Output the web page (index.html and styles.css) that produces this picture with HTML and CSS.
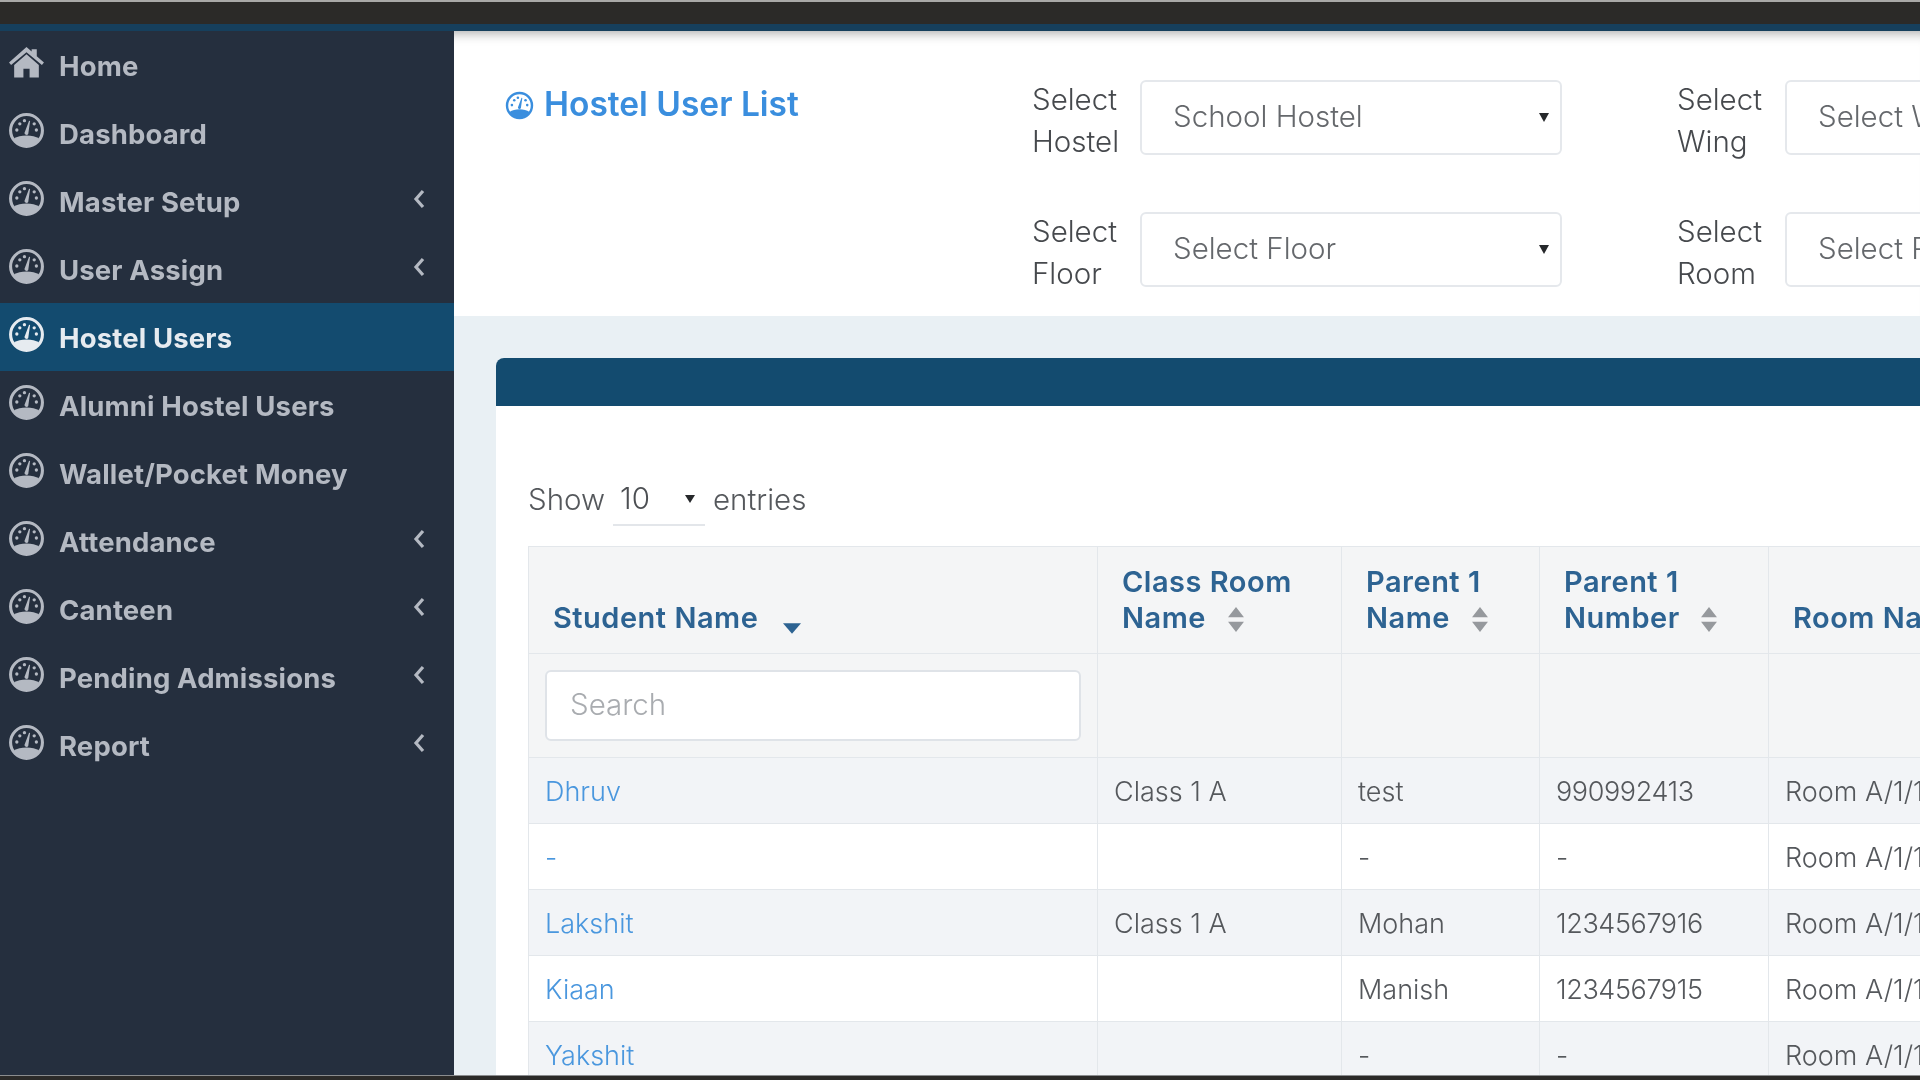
FILE: index.html
```html
<!DOCTYPE html>
<html lang="en">

<head>
    <meta charset="UTF-8">
    <title>Hostel User List</title>
    <link rel="stylesheet" href="styles.css">
</head>

<body>
    <svg class="icon-defs" width="0" height="0">
        <symbol id="gauge" viewBox="0 0 36 36">
            <circle cx="18" cy="18" r="15.5" fill="none" stroke="currentColor" stroke-width="3" />
            <path fill="currentColor" d="M5.500 26C9 23.800 13 22.800 18 22.800s9 1 12.500 3.200C28 31 23 33 18 33S8 31 5.500 26Z" />
            <path fill="currentColor" d="M16 20.500 20.500 8.500l1 .3-1.800 12.500a2 2 0 0 1-3.700-.8Z" />
            <circle cx="8.600" cy="17.500" r="1.600" fill="currentColor" />
            <circle cx="11.500" cy="11.500" r="1.600" fill="currentColor" />
            <circle cx="16" cy="8.400" r="1.600" fill="currentColor" />
            <circle cx="25.500" cy="11.500" r="1.600" fill="currentColor" />
            <circle cx="27.600" cy="17.500" r="1.600" fill="currentColor" />
        </symbol>
        <symbol id="sort" viewBox="0 0 14 22">
            <path fill="currentColor" d="M7 0 14 9H0ZM7 22 0 13H14Z" />
        </symbol>
    </svg>

    <div class="topbar"></div>

    <div class="app">
        <nav class="sidebar">
            <a class="nav-item">
                <svg class="nav-icon" viewBox="0 0 36 36"><path fill="currentColor" d="M18 3 1 18l2 2.400L18 8l15 12.400 2-2.400-7-6.200V5h-5v2.400ZM18 10 6 20.500v12h9V24h6v8.500h9v-12Z" /></svg>
                <span>Home</span>
            </a>
            <a class="nav-item">
                <svg class="nav-icon"><use href="#gauge" /></svg>
                <span>Dashboard</span>
            </a>
            <a class="nav-item">
                <svg class="nav-icon"><use href="#gauge" /></svg>
                <span>Master Setup</span>
                <svg class="nav-arrow" viewBox="0 0 12 20"><path fill="none" stroke="currentColor" stroke-width="3.200" d="M10 2 3 10l7 8" /></svg>
            </a>
            <a class="nav-item">
                <svg class="nav-icon"><use href="#gauge" /></svg>
                <span>User Assign</span>
                <svg class="nav-arrow" viewBox="0 0 12 20"><path fill="none" stroke="currentColor" stroke-width="3.200" d="M10 2 3 10l7 8" /></svg>
            </a>
            <a class="nav-item active">
                <svg class="nav-icon"><use href="#gauge" /></svg>
                <span>Hostel Users</span>
            </a>
            <a class="nav-item">
                <svg class="nav-icon"><use href="#gauge" /></svg>
                <span>Alumni Hostel Users</span>
            </a>
            <a class="nav-item">
                <svg class="nav-icon"><use href="#gauge" /></svg>
                <span>Wallet/Pocket Money</span>
            </a>
            <a class="nav-item">
                <svg class="nav-icon"><use href="#gauge" /></svg>
                <span>Attendance</span>
                <svg class="nav-arrow" viewBox="0 0 12 20"><path fill="none" stroke="currentColor" stroke-width="3.200" d="M10 2 3 10l7 8" /></svg>
            </a>
            <a class="nav-item">
                <svg class="nav-icon"><use href="#gauge" /></svg>
                <span>Canteen</span>
                <svg class="nav-arrow" viewBox="0 0 12 20"><path fill="none" stroke="currentColor" stroke-width="3.200" d="M10 2 3 10l7 8" /></svg>
            </a>
            <a class="nav-item">
                <svg class="nav-icon"><use href="#gauge" /></svg>
                <span>Pending Admissions</span>
                <svg class="nav-arrow" viewBox="0 0 12 20"><path fill="none" stroke="currentColor" stroke-width="3.200" d="M10 2 3 10l7 8" /></svg>
            </a>
            <a class="nav-item">
                <svg class="nav-icon"><use href="#gauge" /></svg>
                <span>Report</span>
                <svg class="nav-arrow" viewBox="0 0 12 20"><path fill="none" stroke="currentColor" stroke-width="3.200" d="M10 2 3 10l7 8" /></svg>
            </a>
        </nav>

        <main class="main">
            <header class="page-head">
                <h1 class="page-title">
                    <svg class="title-icon"><use href="#gauge" /></svg>
                    Hostel User List
                </h1>
                <div class="filters">
                    <div class="filter">
                        <label class="filter-label">Select Hostel</label>
                        <div class="select-wrap"><select class="filter-select"><option>School Hostel</option></select></div>
                    </div>
                    <div class="filter">
                        <label class="filter-label">Select Wing</label>
                        <div class="select-wrap"><select class="filter-select"><option>Select Wing</option></select></div>
                    </div>
                    <div class="filter">
                        <label class="filter-label">Select Floor</label>
                        <div class="select-wrap"><select class="filter-select"><option>Select Floor</option></select></div>
                    </div>
                    <div class="filter">
                        <label class="filter-label">Select Room</label>
                        <div class="select-wrap"><select class="filter-select"><option>Select Room</option></select></div>
                    </div>
                </div>
            </header>

            <section class="card">
                <div class="card-head"></div>
                <div class="card-body">
                    <div class="length-row">
                        Show
                        <div class="length-wrap"><select class="length-select"><option>10</option></select></div>
                        entries
                    </div>

                    <table class="users-table">
                        <colgroup>
                            <col class="col-student">
                            <col class="col-class">
                            <col class="col-parent">
                            <col class="col-number">
                            <col class="col-room">
                        </colgroup>
                        <thead>
                            <tr class="head-row">
                                <th>Student Name <svg class="sort-desc" viewBox="0 0 14 8"><path fill="currentColor" d="M0 0H14L7 8Z" /></svg></th>
                                <th>Class Room Name <svg class="sort-icon"><use href="#sort" /></svg></th>
                                <th>Parent 1 Name <svg class="sort-icon"><use href="#sort" /></svg></th>
                                <th>Parent 1 Number <svg class="sort-icon"><use href="#sort" /></svg></th>
                                <th class="nowrap">Room Name <svg class="sort-icon"><use href="#sort" /></svg></th>
                            </tr>
                            <tr class="search-row">
                                <td><input class="search-input" placeholder="Search"></td>
                                <td></td>
                                <td></td>
                                <td></td>
                                <td></td>
                            </tr>
                        </thead>
                        <tbody>
                            <tr>
                                <td><a class="student-link">Dhruv</a></td>
                                <td>Class 1 A</td>
                                <td>test</td>
                                <td class="num">990992413</td>
                                <td class="nowrap">Room A/1/1</td>
                            </tr>
                            <tr>
                                <td><a class="student-link">-</a></td>
                                <td></td>
                                <td>-</td>
                                <td>-</td>
                                <td class="nowrap">Room A/1/1</td>
                            </tr>
                            <tr>
                                <td><a class="student-link">Lakshit</a></td>
                                <td>Class 1 A</td>
                                <td>Mohan</td>
                                <td class="num">1234567916</td>
                                <td class="nowrap">Room A/1/1</td>
                            </tr>
                            <tr>
                                <td><a class="student-link">Kiaan</a></td>
                                <td></td>
                                <td>Manish</td>
                                <td class="num">1234567915</td>
                                <td class="nowrap">Room A/1/1</td>
                            </tr>
                            <tr>
                                <td><a class="student-link">Yakshit</a></td>
                                <td></td>
                                <td>-</td>
                                <td>-</td>
                                <td class="nowrap">Room A/1/1</td>
                            </tr>
                        </tbody>
                    </table>
                </div>
            </section>
        </main>
    </div>

    <div class="bottombar"></div>
</body>

</html>
```

FILE: styles.css
```css
html,
body {
    height: 100%;
}

body {
    margin: 0;
    display: flex;
    flex-direction: column;
    overflow: hidden;
    font-family: Inter, "Open Sans", sans-serif;
    font-weight: 300;
    color: #55585c;
    background: #2b2a28;
}

.icon-defs {
    position: absolute;
}

.topbar {
    height: 22px;
    flex: none;
    background: #2b2a28;
    border-top: 2px solid #a9a9a7;
    border-bottom: 7px solid #163f5c;
}

.bottombar {
    height: 4px;
    flex: none;
    background: #2b2a28;
    border-top: 1px solid #8a8c8e;
}

.app {
    flex: 1;
    display: flex;
    min-height: 0;
    filter: blur(0.5px);
}

/* sidebar */

.sidebar {
    width: 454px;
    flex: none;
    background: #252f3e;
}

.nav-item {
    height: 68px;
    display: flex;
    align-items: center;
    padding: 0 29px 0 8px;
    color: #b4b9c2;
    font-size: 27.5px;
    font-weight: 650;
    letter-spacing: 0.15px;
}

.nav-item span {
    margin: 2px 0 0 14px;
    flex: 1;
}

.nav-item.active {
    background: #134b6f;
    color: #e6ebf0;
}

.nav-icon {
    width: 37px;
    height: 37px;
    flex: none;
    margin-top: -5px;
}

.nav-arrow {
    width: 12px;
    height: 20px;
    flex: none;
    margin-top: -4px;
}

/* page header */

.main {
    flex: 1;
    min-width: 0;
    overflow: hidden;
    background: #e9f0f4;
}

.page-head {
    display: flex;
    height: 285px;
    box-sizing: border-box;
    padding: 49px 0 0 51px;
    background: #fff;
    box-shadow: inset 0 14px 12px -12px rgba(0, 0, 0, 0.35);
}

.page-title {
    width: 527px;
    flex: none;
    margin: 0;
    padding-top: 1px;
    display: flex;
    align-items: flex-start;
    gap: 10px;
    font-size: 33.5px;
    line-height: 46px;
    font-weight: 600;
    color: #3a8ede;
    white-space: nowrap;
}

.title-icon {
    width: 29px;
    height: 29px;
    flex: none;
    margin-top: 10px;
}

.filters {
    display: grid;
    grid-template-columns: 530px 530px;
    grid-auto-rows: 75px;
    gap: 57px 115px;
}

.filter {
    display: flex;
    align-items: center;
}

.filter-label {
    width: 108px;
    flex: none;
    box-sizing: border-box;
    padding: 4px 10px 0 0;
    font-size: 29.5px;
    line-height: 42px;
    color: #46494d;
}

.select-wrap {
    position: relative;
    flex: 1;
    height: 100%;
}

.select-wrap::after {
    content: "";
    position: absolute;
    top: 33px;
    right: 13px;
    border: 5px solid transparent;
    border-top: 9px solid #26282b;
    border-bottom: 0;
}

.filter-select {
    width: 100%;
    height: 100%;
    box-sizing: border-box;
    padding: 0 31px 3px;
    appearance: none;
    border: 2px solid #e5e8ec;
    border-radius: 6px;
    background: #fff;
    font: inherit;
    font-size: 29.5px;
    color: #65686c;
}

/* card */

.card {
    margin: 42px 0 0 42px;
    width: 1500px;
    background: #fff;
    border-radius: 8px 8px 0 0;
}

.card-head {
    height: 48px;
    background: #134b6f;
    border-radius: 8px 8px 0 0;
}

.card-body {
    padding: 0 0 0 32px;
}

.length-row {
    height: 140px;
    display: flex;
    align-items: center;
    padding-top: 46px;
    box-sizing: border-box;
    font-size: 29.5px;
}

.length-wrap {
    position: relative;
    margin: 0 8px;
}

.length-wrap::after {
    content: "";
    position: absolute;
    top: 23px;
    right: 10px;
    border: 5px solid transparent;
    border-top: 8px solid #26282b;
    border-bottom: 0;
}

.length-select {
    width: 92px;
    height: 54px;
    display: block;
    padding: 0 7px;
    appearance: none;
    border: 0;
    border-bottom: 2px solid #e3e6ea;
    background: #fff;
    font: inherit;
    color: #4c4f53;
}

/* table */

.users-table {
    table-layout: fixed;
    width: 1468px;
    border-collapse: collapse;
    font-size: 27px;
}

.col-student {
    width: 569px;
}

.col-class {
    width: 244px;
}

.col-parent {
    width: 198px;
}

.col-number {
    width: 229px;
}

.col-room {
    width: 228px;
}

.users-table th,
.users-table td {
    border: 1px solid #e3e7eb;
    padding: 1px 16px 0;
    vertical-align: middle;
}

.users-table th {
    padding: 0 24px 17px;
    vertical-align: bottom;
    text-align: left;
    font-size: 29px;
    line-height: 36px;
    font-weight: 600;
    letter-spacing: 0.5px;
    color: #2d6392;
}

.users-table .num {
    letter-spacing: -0.4px;
}

.nowrap {
    white-space: nowrap;
}

.head-row {
    height: 107px;
    background: #f4f5f6;
}

.search-row {
    height: 104px;
    background: #f4f5f6;
}

.users-table tbody tr {
    height: 66px;
}

.users-table tbody tr:nth-child(odd) {
    background: #f2f4f7;
}

.search-input {
    width: 100%;
    height: 71px;
    box-sizing: border-box;
    display: block;
    margin-top: -2px;
    padding: 0 23px 3px;
    border: 2px solid #dfe3e8;
    border-radius: 6px;
    background: #fff;
    font: inherit;
    font-size: 29.5px;
}

.search-input::placeholder {
    color: #a9acb0;
}

.student-link {
    color: #4a97de;
}

.sort-icon {
    width: 16px;
    height: 25px;
    margin-left: 14px;
    color: #96999d;
    vertical-align: -4px;
}

.sort-desc {
    width: 18px;
    height: 11px;
    margin-left: 17px;
    color: #2d6392;
    vertical-align: -6px;
}
```
